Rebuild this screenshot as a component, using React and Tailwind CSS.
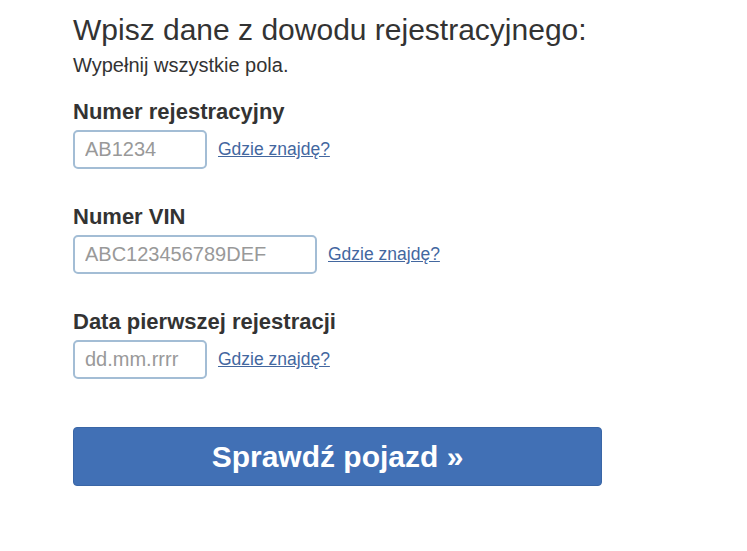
import React from 'react';

const fields = [
  { label: 'Numer rejestracyjny', placeholder: 'AB1234', width: 'w-[134px]' },
  { label: 'Numer VIN', placeholder: 'ABC123456789DEF', width: 'w-[244px]' },
  { label: 'Data pierwszej rejestracji', placeholder: 'dd.mm.rrrr', width: 'w-[134px]' },
];

const App = () => {
  return (
    <div className="min-h-screen bg-white pl-[73px] pt-[13px] font-['Liberation_Sans',Arial,sans-serif]">
      <h1 className="text-[30px] leading-[34px] text-[#333]">Wpisz dane z dowodu rejestracyjnego:</h1>
      <p className="mt-[6px] text-[20px] leading-[24px] text-[#333]">Wypełnij wszystkie pola.</p>

      <div className="flex flex-col">
        {fields.map((f, i) => (
          <div key={f.label} className={i === 0 ? 'mt-[23px]' : 'mt-[36px]'}>
            <label className="block text-[22px] leading-[24px] font-bold text-[#333]">{f.label}</label>
            <div className="mt-[6px] flex items-center">
              <input
                type="text"
                placeholder={f.placeholder}
                className={`${f.width} h-[39px] border-2 border-[#a3bdd5] rounded-[5px] px-[10px] text-[20px] text-[#333] placeholder:text-[#999] outline-none`}
              />
              <a href="#" className="ml-[11px] text-[17.5px] text-[#43679f] underline">
                Gdzie znajdę?
              </a>
            </div>
          </div>
        ))}
      </div>

      <button className="mt-[48px] w-[529px] h-[59px] bg-[#4170b5] border border-[#3a66a6] rounded-[4px] text-white text-[30px] font-bold">
        Sprawdź pojazd »
      </button>
    </div>
  );
};

export default App;
